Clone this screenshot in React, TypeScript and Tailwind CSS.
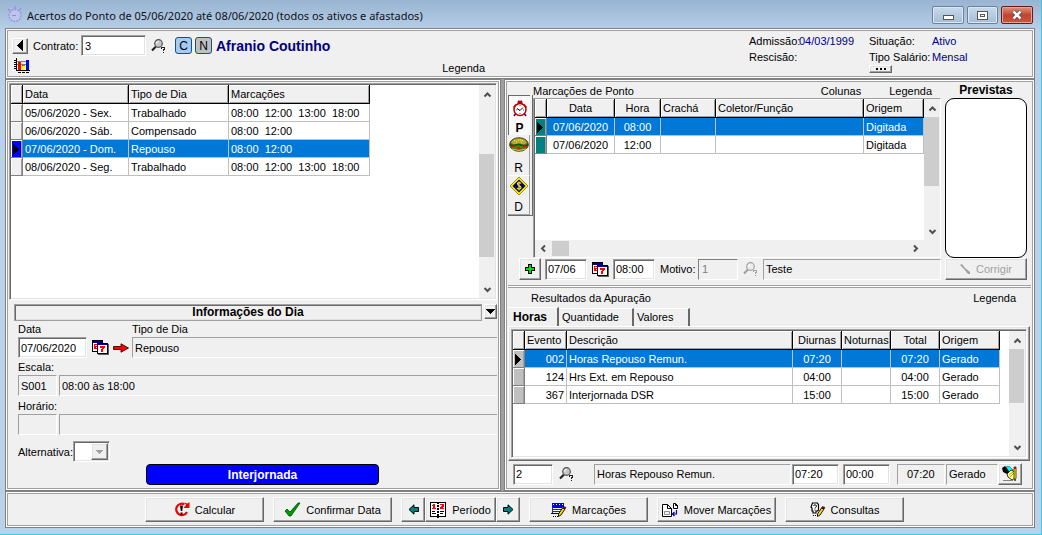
import { useState, type ReactNode } from "react";

const SUNKEN =
  "border border-t-[#a0a0a0] border-l-[#a0a0a0] border-b-white border-r-white shadow-[inset_1px_1px_#696969,inset_-1px_-1px_#e3e3e3]";
const THIN = "border border-t-[#a0a0a0] border-l-[#a0a0a0] border-b-white border-r-white";
const RAISED =
  "border border-t-white border-l-white border-b-[#696969] border-r-[#696969] shadow-[inset_-1px_-1px_#a0a0a0,inset_1px_1px_#e3e3e3]";
const PANEL = "border border-[#808080] shadow-[inset_0_0_0_1px_#fff,inset_0_0_0_2px_#a0a0a0]";
const FIELD = "h-[21px] bg-white text-[11px] outline-none";

function Svg({ w, h, children, className = "" }: { w: number; h: number; children: ReactNode; className?: string }) {
  return (
    <svg width={w} height={h} viewBox={`0 0 ${w} ${h}`} className={`shrink-0 ${className}`} shapeRendering="crispEdges" aria-hidden="true">
      {children}
    </svg>
  );
}

function CalendarIcon() {
  return (
    <Svg w={17} h={15}>
      <path d="M0 0h11v12H0z" fill="#000" />
      <path d="M1 1h9v2H1z" fill="#000090" />
      <path d="M1 3h9v8H1z" fill="#fff" />
      <path d="M2 4h3v1H3v1h2v1H4v1h1v1H2z" fill="#f00" />
      <path d="M5 3h11v11H5z" fill="#000" />
      <path d="M6 4h9v1H6z" fill="#0000b0" />
      <path d="M6 5h9v8H6z" fill="#fff" />
      <path d="M8 6h5v2h-1v1h-1v3H9V9h1V8H8z" fill="#f00" />
      <path d="M16 4h1v11H6v-1h10z" fill="#606060" />
    </Svg>
  );
}

function SearchIcon({ off = false }: { off?: boolean }) {
  const ink = off ? "#a0a0a0" : "#202020";
  return (
    <svg width="15" height="14" viewBox="0 0 15 14" aria-hidden="true">
      <path d="M1 11.500l4-4" stroke={ink} strokeWidth="2.200" />
      <circle cx="7.500" cy="4.500" r="3.800" fill={off ? "#ececec" : "#c4c8c4"} stroke={off ? "#a0a0a0" : "#505050"} strokeWidth="1.200" />
      <path d="M5.500 4.500c0-1 .8-2 2-2" stroke="#fff" fill="none" strokeWidth="1.200" />
      <path d="M10 8h4v3h-1v1h-1v-2h1V9h-2v1h-1zM12 13h1v1h-1z" fill={ink} shapeRendering="crispEdges" />
    </svg>
  );
}

function ChartIcon() {
  return (
    <Svg w={16} h={15}>
      <path d="M2 0h1v12h13v1H2zM0 2h2v1H0zM0 4h2v1H0zM0 6h2v1H0zM0 8h2v1H0zM0 10h2v1H0zM4 14h3v1H4zM8 14h3v1H8zM12 14h3v1h-3z" fill="#000" />
      <path d="M3 3h12v1H3zM3 6h12v1H3z" fill="#808080" />
      <path d="M4 4h3v8H4z" fill="#f00" />
      <path d="M8 7h3v5H8z" fill="#ff0" />
      <path d="M8 7h3v1H8z" fill="#808000" />
      <path d="M12 2h3v10h-3z" fill="#00f" />
    </Svg>
  );
}

function RedArrowIcon() {
  return (
    <svg width="16" height="10" viewBox="0 0 16 10" aria-hidden="true">
      <path d="M.5 3.500H8V.8L15.500 5 8 9.200V6.500H.5z" fill="#f00" stroke="#400" strokeWidth=".9" />
    </svg>
  );
}

function TealArrowIcon({ left = false }: { left?: boolean }) {
  return (
    <svg width="11" height="11" viewBox="0 0 11 11" className={left ? "-scale-x-100" : ""} aria-hidden="true">
      <path d="M.5 3.500H5V.8l5 4.700-5 4.700V7.500H.5z" fill="#008080" stroke="#000" />
    </svg>
  );
}

function ClockIcon() {
  return (
    <svg width="16" height="17" viewBox="0 0 16 17" className="shrink-0" aria-hidden="true">
      <path d="M6 1h4v3H6z" fill="#e00000" stroke="#800000" strokeWidth=".7" />
      <path d="M4 13l-2 3M12 13l2 3" stroke="#600060" strokeWidth="1.600" />
      <circle cx="8" cy="9.500" r="6" fill="#fff" stroke="#b00000" strokeWidth="1.500" />
      <path d="M1.500 7.500l2.500-3M14.500 7.500l-2.500-3" stroke="#e00000" strokeWidth="1.400" />
      <path d="M5 8.500l3 2 3-3" stroke="#000" fill="none" />
      <path d="M8 5v1M8 13v1M4 10h1M11 10h1" stroke="#555" />
    </svg>
  );
}

function BurgerIcon() {
  return (
    <svg width="20" height="15" viewBox="0 0 20 15" className="shrink-0" aria-hidden="true">
      <ellipse cx="10" cy="7.500" rx="9.400" ry="6.800" fill="#706818" stroke="#303000" strokeWidth=".8" />
      <path d="M2 6C4 2 7 1.500 10 1.500s6 .5 8 4.500c-4 2-12 2-16 0z" fill="#b8a838" />
      <path d="M5 3.500h2M9 3h3M13 3.500h2M7 5h2M12 5h2" stroke="#fff040" strokeDasharray="1 1" />
      <path d="M1 7.500q3 2 6 .5t6 .5 6-1" stroke="#006000" strokeWidth="1.800" fill="none" />
      <path d="M2 9.500h4M14 9.500h4M8 11h3" stroke="#d01818" strokeWidth="1.500" />
      <path d="M5 10.500h3M11 10h3" stroke="#00b000" strokeWidth="1.500" />
      <path d="M3 12q7 3 14 0" stroke="#d8c850" fill="none" />
    </svg>
  );
}

function MoneyIcon() {
  return (
    <svg width="20" height="20" viewBox="0 0 20 20" className="shrink-0" aria-hidden="true">
      <path d="M10 1l9 9-9 9-9-9z" fill="#ffee00" stroke="#807800" strokeWidth=".8" />
      <path d="M10 3.500l6.500 6.500-6.500 6.500L3.500 10z" fill="#000080" />
      <path d="M12 7.500c-1-1.500-4-1-3.500.7.500 1.500 3.500 1.500 3.500 3.200S9 13.500 8 12M10 5.500v9" stroke="#ffee00" strokeWidth="1.100" fill="none" />
    </svg>
  );
}

function RecalcIcon() {
  return (
    <svg width="16" height="15" viewBox="0 0 16 15" aria-hidden="true">
      <path d="M10.500 2.300A5.700 5.700 0 1 0 13 10" fill="none" stroke="#f00000" strokeWidth="2.200" />
      <path d="M9.500 6h6V0l-2 1.500-3-1 1.500 2.500z" fill="#f00000" />
      <path d="M6 3.500h3l-.8 5.500H6.800zM6.500 10.500h2v2h-2z" fill="#000" />
    </svg>
  );
}

function CheckIcon() {
  return (
    <svg width="17" height="15" viewBox="0 0 17 15" aria-hidden="true">
      <path d="M1 9l2-2 3 3L14 1h2L7 14H5z" fill="#009a00" stroke="#004f00" strokeWidth=".8" />
    </svg>
  );
}

function PeriodIcon() {
  return (
    <Svg w={16} h={16}>
      <path d="M0 0h16v15H9v1H7v-1H0z" fill="#000" />
      <path d="M1 1h6v13H1zM9 1h6v13H9z" fill="#fff" />
      <path d="M3 2h2v4h1v1H2V6h1V4H2V3h1zM10 2h4v3h-1v1h1v1h-4V5h1V4h1V3h-2z" fill="#f00" />
      <path d="M2 9h3v1H2zM2 11h4v1H2zM10 9h4v1h-4zM10 11h3v1h-3z" fill="#000" />
      <path d="M7 2h2v1H7zM7 5h2v1H7zM7 8h2v1H7zM7 11h2v1H7z" fill="#fff" />
    </Svg>
  );
}

function Pencil() {
  return (
    <>
      <path d="M11.500 6L7.500 12v2.500l2.500-1.500 4-6z" fill="#ffe000" stroke="#000" strokeWidth=".9" />
      <path d="M11.500 6l1-1.500 2.500 1-1 1.500z" fill="#c00000" stroke="#000" strokeWidth=".6" />
    </>
  );
}

function MarksIcon() {
  return (
    <svg width="16" height="16" viewBox="0 0 16 16" aria-hidden="true">
      <path d="M1 1h12v4H1z" fill="#0000f0" />
      <path d="M2 2.500h10" stroke="#fff" strokeDasharray="1 2" />
      <path d="M1 5.500h10M0 11.500h9" stroke="#000080" />
      <path d="M1 7h11v2H1z" fill="#fff" />
      <path d="M1 7.500h11M1 9.500h9M1.500 5v6" stroke="#2020d0" />
      <path d="M2 14.500h6" stroke="#000" strokeDasharray="1 1" />
      <Pencil />
    </svg>
  );
}

function MoveIcon() {
  return (
    <svg width="17" height="14" viewBox="0 0 17 14" aria-hidden="true">
      <path d="M.5 1.500h5l4 4v8h-9zM5.500 1.500v4h4" fill="#fff" stroke="#000" />
      <path d="M2.500 8.500h5v3h-5z" fill="#f0f0f0" stroke="#909090" />
      <path d="M11.500.5h2l2 2v3h-4zM13.500.5v2h2" fill="#fff" stroke="#000" />
      <path d="M14.500 7v4H11M12.500 9l-2 2 2 2" fill="none" stroke="#00009b" strokeWidth="1.200" />
    </svg>
  );
}

function QueryIcon() {
  return (
    <svg width="16" height="15" viewBox="0 0 16 15" aria-hidden="true">
      <path d="M2.500 1h5l1 2v5l-1 1H6v2H3V9H2V6L1 5z" fill="#fff" stroke="#000" strokeWidth="1.200" />
      <path d="M3.500 4c.2-1.500 3-1.500 3 0S5 5 5 6.500M5 7.500v1" fill="none" stroke="#000" />
      <path d="M3 13.500h6" stroke="#000" strokeDasharray="1 1" />
      <Pencil />
    </svg>
  );
}

function EditIcon() {
  return (
    <svg width="16" height="16" viewBox="0 0 16 16" aria-hidden="true">
      <path d="M0 2l3-2 5 5-3 3-4-2z" fill="#000" />
      <path d="M4 1l3-1 4 4-3 3z" fill="#00ffff" stroke="#006060" strokeWidth=".6" />
      <path d="M5 8l4-4 4 2v6l-3 2-4-3z" fill="#ff9" stroke="#000" strokeWidth=".8" />
      <path d="M7 9l4-3M8 11l4-4" stroke="#c90" />
      <path d="M12 1h2v11l-1 3-1-3z" fill="#ff0" stroke="#000" strokeWidth=".7" />
      <path d="M12 1h2v2h-2z" fill="#e00000" />
      <path d="M1 14.500h10" stroke="#808080" />
    </svg>
  );
}

function Chevron({ d }: { d: "up" | "down" | "left" | "right" }) {
  const paths = { up: "M1.500 6.500L4.500 3.500l3 3", down: "M1.500 3l3 3 3-3", left: "M6 1.500l-3 3 3 3", right: "M3 1.500l3 3-3 3" };
  return (
    <svg width="9" height="9" viewBox="0 0 9 9" aria-hidden="true">
      <path d={paths[d]} fill="none" stroke="#505050" strokeWidth="2" />
    </svg>
  );
}

function VScroll({ thumb }: { thumb: string }) {
  return (
    <div className="flex w-4 shrink-0 flex-col bg-[#f0f0f0]">
      <button aria-label="Subir" className="flex h-[18px] shrink-0 items-center justify-center"><Chevron d="up" /></button>
      <div className="flex flex-1 flex-col">
        <div className={`mr-px bg-[#cdcdcd] ${thumb}`} />
      </div>
      <button aria-label="Descer" className="flex h-[17px] shrink-0 items-center justify-center"><Chevron d="down" /></button>
    </div>
  );
}

function Th({ children, center = false, className = "" }: { children?: ReactNode; center?: boolean; className?: string }) {
  return (
    <th
      className={`h-[19px] overflow-hidden border-r border-b border-black bg-[#f0f0f0] px-[2px] font-normal whitespace-nowrap shadow-[inset_1px_1px_#fff,inset_-1px_-1px_#a0a0a0] ${
        center ? "text-center" : "text-left"
      } ${className}`}
    >
      {children}
    </th>
  );
}

function Td({ children, className = "" }: { children?: ReactNode; className?: string }) {
  return (
    <td className={`h-[18px] overflow-hidden border-r border-b border-[#c0c0c0] px-[2px] whitespace-pre ${className}`}>{children}</td>
  );
}

function Mark({ on = false, className }: { on?: boolean; className: string }) {
  return (
    <td className={`h-[18px] border-r border-b border-[#808080] p-0 shadow-[inset_1px_1px_#fff,inset_-1px_0_#a0a0a0] ${className}`}>
      {on && (
        <Svg w={9} h={12}>
          <path d="M2 1h1v1h1v1h1v1h1v1h1v1h1v1H7v1H6v1H5v1H4v1H3v1H2z" fill="#000" />
        </Svg>
      )}
    </td>
  );
}

const DAYS = [
  ["05/06/2020 - Sex.", "Trabalhado", "08:00  12:00  13:00  18:00"],
  ["06/06/2020 - Sáb.", "Compensado", "08:00  12:00"],
  ["07/06/2020 - Dom.", "Repouso", "08:00  12:00"],
  ["08/06/2020 - Seg.", "Trabalhado", "08:00  12:00  13:00  18:00"],
];

const RESULTS = [
  ["002", "Horas Repouso Remun.", "07:20"],
  ["124", "Hrs Ext. em Repouso", "04:00"],
  ["367", "Interjornada DSR", "15:00"],
];

const SELECTED = "bg-[#0078d7] text-white";

function TitleBar() {
  return (
    <header className="flex h-7 items-center pr-2 pl-[7px]">
      <svg width="16" height="17" viewBox="0 0 16 17" aria-hidden="true">
        <circle cx="8" cy="9.500" r="6" fill="#b8c8ec" stroke="#a08fe0" strokeWidth="1.300" strokeDasharray="2 1" />
        <path d="M5 9.500h4M1 3l2 2M8 0v3M14 2l-2 3" stroke="#9a88e0" strokeWidth="1.200" />
      </svg>
      <h1 className="ml-1 flex-1 truncate pt-1 font-['Noto_Sans','Open_Sans',sans-serif] text-[11px] text-[#101018]">
        Acertos do Ponto de 05/06/2020 até 08/06/2020 (todos os ativos e afastados)
      </h1>
      <div className="flex gap-[3px] pt-[2px]">
        <button aria-label="Minimizar" className="flex h-[18px] w-[32px] items-center justify-center rounded-[2px] border border-[#6b8099] bg-gradient-to-b from-[#c9daeb] to-[#a5bdd6] shadow-[inset_0_0_0_1px_#dbe7f3]">
          <span className="mt-1 h-[5px] w-[11px] border border-[#555] bg-white" />
        </button>
        <button aria-label="Maximizar" className="flex h-[18px] w-[31px] items-center justify-center rounded-[2px] border border-[#6b8099] bg-gradient-to-b from-[#c9daeb] to-[#a5bdd6] shadow-[inset_0_0_0_1px_#dbe7f3]">
          <span className="flex h-[9px] w-[11px] items-center justify-center border border-[#555] bg-white"><span className="h-[3px] w-[5px] border border-[#555]" /></span>
        </button>
        <button aria-label="Fechar" className="flex h-[18px] w-[32px] items-center justify-center rounded-[2px] border border-[#6b1a12] bg-gradient-to-b from-[#dc9384] via-[#c0452f] to-[#cc5640] shadow-[inset_0_0_0_1px_#e3a598]">
          <svg width="12" height="10" viewBox="0 0 12 10" aria-hidden="true">
            <path d="M2.500 1.500l7 7M9.500 1.500l-7 7" stroke="#444" strokeWidth="4" />
            <path d="M2.500 1.500l7 7M9.500 1.500l-7 7" stroke="#fff" strokeWidth="2.500" />
          </svg>
        </button>
      </div>
    </header>
  );
}

function ContractHeader() {
  return (
    <section className={`flex h-[51px] bg-[#f0f0f0] p-[3px] pr-[10px] ${PANEL}`}>
      <div className="flex flex-1 flex-col pl-[3px]">
        <div className="flex h-[26px] items-center pt-px">
          <button aria-label="Anterior" className={`flex size-4 items-center justify-center ${RAISED}`}>
            <Svg w={8} h={11}><path d="M7 0v11H6v-1H5V9H4V8H3V7H2V6H1V5h1V4h1V3h1V2h1V1h1V0z" /></Svg>
          </button>
          <label htmlFor="contrato" className="ml-[5px] w-12">Contrato:</label>
          <input id="contrato" defaultValue="3" className={`w-[65px] pl-[3px] ${FIELD} ${SUNKEN}`} />
          <button aria-label="Pesquisar contrato" className="ml-[5px] w-[16px]"><SearchIcon /></button>
          <button className="ml-2 size-[17px] rounded-[3px] border border-[#1f4e79] bg-[#a6caf0] text-[12px] leading-none">C</button>
          <button className="ml-[3px] size-[17px] rounded-[3px] border border-[#1f4e79] bg-[#c0c0c0] text-[12px] leading-none">N</button>
          <strong className="ml-1 text-[14px] text-[#000080]">Afranio Coutinho</strong>
        </div>
        <div className="flex items-center pl-[2px]">
          <button aria-label="Gráfico"><ChartIcon /></button>
        </div>
      </div>
      <a href="#legenda-geral" className="mr-[264px] self-end leading-[14px]">Legenda</a>
      <dl className="grid w-[275px] grid-cols-[50px_70px_63px_1fr] content-start pt-px leading-4 text-[#000080] [&>dt]:whitespace-nowrap [&>dt]:text-black">
        <dt>Admissão:</dt><dd>04/03/1999</dd>
        <dt>Situação:</dt><dd>Ativo</dd>
        <dt>Rescisão:</dt><dd />
        <dt>Tipo Salário:</dt><dd>Mensal</dd>
        <dd className="col-start-3 flex">
          <button aria-label="Mais detalhes" className={`flex h-2 w-[23px] items-center justify-center gap-[2px] ${RAISED}`}>
            <i className="size-[2px] bg-black" /><i className="size-[2px] bg-black" /><i className="size-[2px] bg-black" />
          </button>
        </dd>
      </dl>
    </section>
  );
}

function DayPanel() {
  return (
    <section className={`flex min-w-0 flex-col p-[3px] ${PANEL}`}>
      <div className={`flex min-h-[217px] flex-1 bg-white p-px ${SUNKEN}`}>
        <div className="flex-1 overflow-hidden">
          <table className="w-[359px] table-fixed border-separate border-spacing-0">
            <thead>
              <tr>
                <Th className="w-3" />
                <Th className="w-[106px]">Data</Th>
                <Th className="w-[100px]">Tipo de Dia</Th>
                <Th>Marcações</Th>
              </tr>
            </thead>
            <tbody>
              {DAYS.map(([date, kind, marks], i) => (
                <tr key={date} className={i === 2 ? SELECTED : ""}>
                  <Mark on={i === 2} className={i === 2 ? "bg-[#0000ff]" : "bg-[#f0f0f0]"} />
                  <Td>{date}</Td>
                  <Td>{kind}</Td>
                  <Td>{marks}</Td>
                </tr>
              ))}
            </tbody>
          </table>
        </div>
        <VScroll thumb="mt-[51px] h-[103px]" />
      </div>

      <div className="flex h-[187px] flex-col">
        <div className="flex gap-[2px] pt-1 pl-[5px]">
          <h2 className="h-[17px] flex-1 border border-[#a0a0a0] text-center text-[12px] leading-[15px] font-bold shadow-[inset_1px_1px_#696969,inset_-1px_-1px_#e3e3e3]">Informações do Dia</h2>
          <button aria-label="Recolher" className={`flex h-[15px] w-[13px] items-center justify-center ${RAISED}`}>
            <Svg w={9} h={5}><path d="M0 0h9v1H8v1H7v1H6v1H5v1H4V4H3V3H2V2H1V1H0z" /></Svg>
          </button>
        </div>
        <div className="flex pt-[2px] pl-[9px] leading-[13px]">
          <label htmlFor="data" className="w-[114px]">Data</label>
          <label htmlFor="tipo">Tipo de Dia</label>
        </div>
        <div className="flex items-center pt-px pl-[9px]">
          <input id="data" defaultValue="07/06/2020" className={`w-[69px] pl-[2px] ${FIELD} ${SUNKEN}`} />
          <button aria-label="Calendário" className="ml-[5px]"><CalendarIcon /></button>
          <button aria-label="Alterar tipo" className="mr-[3px] ml-1"><RedArrowIcon /></button>
          <input id="tipo" readOnly defaultValue="Repouso" className={`h-[21px] min-w-0 flex-1 pl-[2px] text-[11px] ${THIN} border-r-0`} />
        </div>
        <label htmlFor="escala" className="pt-[3px] pl-[9px] leading-[13px]">Escala:</label>
        <div className="flex gap-[2px] pt-px pl-[9px]">
          <input id="escala" readOnly defaultValue="S001" className={`h-[21px] w-[39px] pl-[2px] text-[11px] ${THIN}`} />
          <input aria-label="Descrição da escala" readOnly defaultValue="08:00 às 18:00" className={`h-[21px] min-w-0 flex-1 pl-[2px] text-[11px] ${THIN} border-r-0`} />
        </div>
        <label htmlFor="horario" className="pt-[4px] pl-[9px] leading-[13px]">Horário:</label>
        <div className="flex gap-[2px] pt-px pl-[9px]">
          <input id="horario" readOnly className={`h-[21px] w-[39px] ${THIN}`} />
          <input aria-label="Descrição do horário" readOnly className={`h-[21px] min-w-0 flex-1 ${THIN} border-r-0`} />
        </div>
        <div className="flex items-center pt-[6px] pl-[9px]">
          <label htmlFor="alt" className="w-[55px]">Alternativa:</label>
          <span className={`relative flex h-[21px] w-[37px] bg-white ${SUNKEN}`}>
            <select id="alt" disabled className="w-full appearance-none bg-transparent" />
            <span className={`pointer-events-none absolute top-px right-px flex h-[17px] w-[17px] items-center justify-center bg-[#f0f0f0] ${RAISED}`}>
              <Svg w={7} h={4}><path d="M0 0h7v1H6v1H5v1H4v1H3V3H2V2H1V1H0z" fill="#a0a0a0" /></Svg>
            </span>
          </span>
        </div>
        <button className="mt-[2px] ml-[137px] h-[21px] w-[233px] rounded-[4px] border border-black bg-[#0000ff] text-[12px] leading-none font-bold text-white">Interjornada</button>
      </div>
    </section>
  );
}

const SIDE = "flex h-10 w-[22px] flex-col items-center justify-between overflow-hidden text-[12px] leading-[14px]";

function MarksPanel() {
  return (
    <section className="flex h-[202px] flex-col">
      <div className="flex h-[175px]">
        <div className="flex w-[25px] shrink-0 flex-col pt-3">
          <div className="border-r border-b border-[#696969]">
            <button aria-pressed="true" className={`${SIDE} border-t border-l border-[#696969] bg-[#fafafa] pt-1 font-bold`}><ClockIcon />P</button>
            <button className={`${SIDE} border-r border-[#a0a0a0] pt-[2px]`}><BurgerIcon />R</button>
            <button className={`${SIDE} border-t border-r border-b border-t-white border-r-[#a0a0a0] border-b-[#a0a0a0]`}><MoneyIcon />D</button>
          </div>
        </div>
        <div className="flex min-w-0 flex-1 flex-col">
          <div className="flex h-[15px] items-center pr-[9px]">
            <h2 className="flex-1">Marcações de Ponto</h2>
            <a href="#colunas" className="mr-7">Colunas</a>
            <a href="#legenda-marcacoes">Legenda</a>
          </div>
          <div className={`flex min-h-0 flex-1 flex-col bg-white pl-px ${SUNKEN}`}>
            <div className="flex min-h-0 flex-1">
              <div className="flex-1 overflow-hidden">
                <table className="w-full table-fixed border-separate border-spacing-0">
                  <thead>
                    <tr>
                      <Th className="w-3" />
                      <Th center className="w-[68px]">Data</Th>
                      <Th center className="w-[46px]">Hora</Th>
                      <Th className="w-[55px]">Crachá</Th>
                      <Th>Coletor/Função</Th>
                      <Th className="w-[60px]">Origem</Th>
                    </tr>
                  </thead>
                  <tbody>
                    {["08:00", "12:00"].map((hour, i) => (
                      <tr key={hour} className={i === 0 ? SELECTED : ""}>
                        <Mark on={i === 0} className="bg-[#008080]" />
                        <Td className="text-center">07/06/2020</Td>
                        <Td className="text-center">{hour}</Td>
                        <Td />
                        <Td />
                        <Td>Digitada</Td>
                      </tr>
                    ))}
                  </tbody>
                </table>
              </div>
              <VScroll thumb="h-[69px]" />
            </div>
            <div className="flex h-[17px] shrink-0 items-center bg-[#f0f0f0] pr-4">
              <button aria-label="Esquerda" className="flex w-[17px] justify-center"><Chevron d="left" /></button>
              <div className="flex flex-1"><div className="h-[15px] w-[17px] bg-[#cdcdcd]" /></div>
              <button aria-label="Direita" className="flex w-[17px] justify-center"><Chevron d="right" /></button>
            </div>
          </div>
        </div>
        <div className="mr-1 ml-1 flex w-[82px] shrink-0 flex-col">
          <h2 className="h-[15px] text-center text-[12px] leading-[14px] font-bold">Previstas</h2>
          <div className="flex-1 rounded-[9px] border border-black bg-white" />
        </div>
      </div>
      <div className="flex items-center pr-1 pl-[11px]">
        <button aria-label="Adicionar" className={`flex size-[22px] items-center justify-center ${RAISED}`}>
          <Svg w={10} h={10}>
            <path d="M3 0h4v3h3v4H7v3H3V7H0V3h3z" fill="#000" />
            <path d="M4 1h2v3h3v2H6v3H4V6H1V4h3z" fill="#00e000" />
          </Svg>
        </button>
        <input aria-label="Dia" defaultValue="07/06" className={`ml-1 w-[42px] pl-[2px] ${FIELD} ${SUNKEN}`} />
        <button aria-label="Calendário" className="mr-1 ml-[5px]"><CalendarIcon /></button>
        <input aria-label="Hora" defaultValue="08:00" className={`w-[42px] pl-[2px] ${FIELD} ${SUNKEN}`} />
        <label htmlFor="motivo" className="ml-[5px] w-[38px]">Motivo:</label>
        <input id="motivo" disabled defaultValue="1" className="h-[21px] w-10 border border-t-[#808080] border-r-white border-b-white border-l-[#808080] bg-[#f0f0f0] pl-[3px] text-[11px] text-[#808080]" />
        <span className="mx-[5px]"><SearchIcon off /></span>
        <input aria-label="Descrição do motivo" readOnly defaultValue="Teste" className={`h-[21px] min-w-0 flex-1 pl-[2px] text-[11px] ${THIN}`} />
        <button disabled className={`ml-1 flex h-[22px] w-[82px] items-center justify-center gap-[5px] text-[#a0a0a0] ${RAISED}`}>
          <svg width="11" height="10" viewBox="0 0 11 10" aria-hidden="true"><path d="M0 1l2-1 3 4 5 4v2H8L4 5z" fill="#a0a0a0" /></svg>
          Corrigir
        </button>
      </div>
    </section>
  );
}

const TABS = ["Horas", "Quantidade", "Valores"];
const TAB_WIDTHS = ["w-[51px]", "w-[75px]", "w-[56px]"];

function ResultsPanel() {
  const [tab, setTab] = useState(0);
  return (
    <section className="flex flex-1 flex-col">
      <div className="flex h-[19px] items-center pr-[15px] pl-[23px]">
        <h2 className="flex-1">Resultados da Apuração</h2>
        <a href="#legenda-resultados">Legenda</a>
      </div>
      <div role="tablist" className="flex h-[19px] items-end">
        {TABS.map((name, i) => (
          <button
            key={name}
            role="tab"
            aria-selected={tab === i}
            onClick={() => setTab(i)}
            className={`border-t border-r-2 border-t-white border-r-[#696969] text-left leading-none ${TAB_WIDTHS[i]} ${
              tab === i ? "h-[19px] pl-[5px] text-[12px] font-bold" : "h-[18px] pl-[3px]"
            }`}
          >
            {name}
          </button>
        ))}
      </div>
      <div className={`mr-px flex flex-1 p-[2px] ${RAISED}`}>
        <div className={`flex min-h-[129px] flex-1 bg-white p-px ${SUNKEN}`}>
          <div className="flex-1 overflow-hidden pr-[9px]">
            <table className="w-full table-fixed border-separate border-spacing-0">
              <thead>
                <tr>
                  <Th className="w-3" />
                  <Th className="w-[42px]">Evento</Th>
                  <Th>Descrição</Th>
                  <Th center className="w-[49px]">Diurnas</Th>
                  <Th className="w-[49px]">Noturnas</Th>
                  <Th center className="w-[49px]">Total</Th>
                  <Th className="w-[60px]">Origem</Th>
                </tr>
              </thead>
              <tbody>
                {RESULTS.map(([code, name, time], i) => (
                  <tr key={code} className={i === 0 ? SELECTED : ""}>
                    <Mark on={i === 0} className="bg-[#c0c0c0]" />
                    <Td className="text-right">{code}</Td>
                    <Td>{name}</Td>
                    <Td className="text-center">{time}</Td>
                    <Td />
                    <Td className="text-center">{time}</Td>
                    <Td>Gerado</Td>
                  </tr>
                ))}
              </tbody>
            </table>
          </div>
          <VScroll thumb="h-[54px]" />
        </div>
      </div>
      <div className="flex items-center pt-[2px] pr-[9px] pb-[2px] pl-[5px]">
        <input aria-label="Evento" defaultValue="2" className={`w-10 pl-[2px] ${FIELD} ${SUNKEN}`} />
        <button aria-label="Pesquisar evento" className="mr-5 ml-[6px]"><SearchIcon /></button>
        <input aria-label="Descrição" readOnly defaultValue="Horas Repouso Remun." className={`h-[21px] min-w-0 flex-1 pl-[2px] text-[11px] ${THIN}`} />
        <input aria-label="Diurnas" defaultValue="07:20" className={`ml-px w-[47px] pl-[2px] ${FIELD} ${SUNKEN}`} />
        <input aria-label="Noturnas" defaultValue="00:00" className={`ml-1 w-[47px] pl-[2px] ${FIELD} ${SUNKEN}`} />
        <input aria-label="Total" readOnly defaultValue="07:20" className={`ml-[7px] h-[21px] w-12 pr-0 pl-[9px] text-[11px] ${THIN}`} />
        <input aria-label="Origem" readOnly defaultValue="Gerado" className={`ml-px h-[21px] w-[52px] pl-[2px] text-[11px] ${THIN}`} />
        <button aria-label="Editar" className={`flex h-[22px] w-[24px] items-center justify-center ${RAISED}`}><EditIcon /></button>
      </div>
    </section>
  );
}

function Action({ icon, children }: { icon: ReactNode; children: ReactNode }) {
  return (
    <button className={`mr-[9px] flex h-[25px] w-[119px] items-center justify-center gap-[5px] whitespace-nowrap ${RAISED}`}>
      {icon}
      {children}
    </button>
  );
}

export default function App() {
  return (
    <div className="flex min-h-screen flex-col border-r border-b border-[#38cbe4] bg-[#b9d1ea] bg-gradient-to-b from-[#99b4d1] from-0% via-[#b9d1ea] via-[32px] to-[#b9d1ea] font-['Liberation_Sans',Arial,sans-serif] text-[11px] leading-[14px] text-black">
      <TitleBar />
      <div className="mr-[6px] mb-[6px] ml-[5px] flex flex-1 flex-col bg-[#f0f0f0]">
        <ContractHeader />
        <main className="grid flex-1 grid-cols-[minmax(0,496fr)_minmax(0,534fr)]">
          <DayPanel />
          <div className="flex min-w-0 border-l-[3px] border-[#a0a0a0]">
            <div className={`flex min-w-0 flex-1 flex-col p-[3px] ${PANEL}`}>
              <MarksPanel />
              <hr className="h-[3px] border-t border-b border-[#a0a0a0] bg-white" />
              <ResultsPanel />
            </div>
          </div>
        </main>
        <footer className={`flex h-[37px] items-center pl-[139px] ${PANEL}`}>
          <Action icon={<RecalcIcon />}>Calcular</Action>
          <Action icon={<CheckIcon />}>Confirmar Data</Action>
          <div className="mr-[9px] flex">
            <button aria-label="Período anterior" className={`flex h-[25px] w-6 items-center justify-center ${RAISED}`}><TealArrowIcon left /></button>
            <button className={`flex h-[25px] w-[71px] items-center justify-center gap-[6px] ${RAISED}`}><PeriodIcon />Período</button>
            <button aria-label="Próximo período" className={`flex h-[25px] w-6 items-center justify-center ${RAISED}`}><TealArrowIcon /></button>
          </div>
          <Action icon={<MarksIcon />}>Marcações</Action>
          <Action icon={<MoveIcon />}>Mover Marcações</Action>
          <Action icon={<QueryIcon />}>Consultas</Action>
        </footer>
      </div>
    </div>
  );
}
